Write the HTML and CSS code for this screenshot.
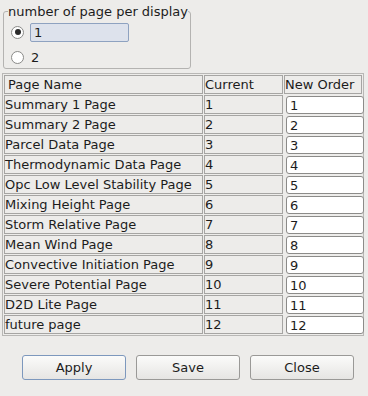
FILE: index.html
```html
<!DOCTYPE html>
<html lang="en">
<head>
  <meta charset="UTF-8">
  <title>Page Order</title>
  <link rel="stylesheet" href="styles.css">
</head>
<body>

<fieldset class="group">
  <legend>number of page per display</legend>
  <div class="opt">
    <span class="radio on"></span>
    <input class="num" type="text" value="1">
  </div>
  <div class="opt">
    <span class="radio"></span>
    <span class="opt-label">2</span>
  </div>
</fieldset>

<table id="pageTable">
  <thead>
    <tr>
      <th class="name">Page Name</th>
      <th class="cur">Current</th>
      <th class="order">New Order</th>
    </tr>
  </thead>
  <tbody>
    <!-- filled below -->
  </tbody>
</table>

<div class="buttons">
  <button class="btn focus">Apply</button>
  <button class="btn">Save</button>
  <button class="btn">Close</button>
</div>

<script>
  const pages = [
    'Summary 1 Page',
    'Summary 2 Page',
    'Parcel Data Page',
    'Thermodynamic Data Page',
    'Opc Low Level Stability Page',
    'Mixing Height Page',
    'Storm Relative Page',
    'Mean Wind Page',
    'Convective Initiation Page',
    'Severe Potential Page',
    'D2D Lite Page',
    'future page'
  ];

  const tbody = document.getElementById('pageTable').tBodies[0];

  pages.forEach((name, i) => {
    tbody.innerHTML += `
      <tr>
        <td>${name}</td>
        <td>${i + 1}</td>
        <td class="order"><input type="text" value="${i + 1}"></td>
      </tr>
    `;
  });
</script>

</body>
</html>
```

FILE: styles.css
```css
body {
  margin: 0;
  background-color: #edecea;
  font-family: "DejaVu Sans", sans-serif;
  font-size: 13px;
  color: #1c1c1c;
  width: 368px;
  height: 396px;
  overflow: hidden;
}

/* group box */
.group {
  margin: 4px 0 0 3px;
  width: 188px;
  box-sizing: border-box;
  height: 65px;
  border: 1px solid #b4b3b1;
  border-radius: 3px;
  padding: 3px 0 0 7px;
}

.group legend {
  padding: 0;
  margin-left: -3px;
  line-height: 15px;
}

.opt {
  display: flex;
  align-items: center;
  height: 20px;
  margin-bottom: 5px;
}

.radio {
  width: 11px;
  height: 11px;
  border: 1px solid #8a8a88;
  border-radius: 50%;
  background: #fff;
  display: flex;
  align-items: center;
  justify-content: center;
  margin-right: 6px;
}

.radio.on::after {
  content: "";
  width: 6px;
  height: 6px;
  border-radius: 50%;
  background: #2a2a2a;
}

.num {
  width: 99px;
  height: 19px;
  box-sizing: border-box;
  border: 1px solid #8ea2c0;
  border-radius: 2px;
  background: #dde2ec;
  font: inherit;
  color: inherit;
  padding: 0 0 0 3px;
  margin: 0;
}

.opt-label {
  margin-left: 1px;
}

/* table */
table {
  margin: 4px 0 0 2px;
  width: 362px;
  border: 1px solid #b8b7b5;
  border-spacing: 1px;
  table-layout: fixed;
}

th, td {
  height: 17px;
  padding: 0;
  border: 1px solid #a6a5a3;
  font-weight: normal;
  text-align: left;
  white-space: nowrap;
  line-height: 17px;
}

th.name {
  width: 194px;
  padding-left: 3px;
}

th.cur {
  width: 77px;
}

td.order {
  border: none;
  padding: 1px 0 0 2px;
  height: 18px;
}

td.order input {
  width: 78px;
  height: 18px;
  box-sizing: border-box;
  border: 1px solid #8c8b89;
  border-radius: 3px;
  background: #fff;
  font: inherit;
  color: inherit;
  padding: 0 0 0 3px;
  margin: 0;
  display: block;
}

/* buttons */
.buttons {
  display: flex;
  gap: 10px;
  padding-left: 22px;
  margin-top: 19px;
}

.btn {
  width: 104px;
  height: 25px;
  border: 1px solid #9a9997;
  border-radius: 3px;
  background: linear-gradient(#fbfbfa, #e6e5e3);
  font: inherit;
  color: inherit;
  padding: 0;
}

.btn.focus {
  border-color: #7d98bd;
}
```
